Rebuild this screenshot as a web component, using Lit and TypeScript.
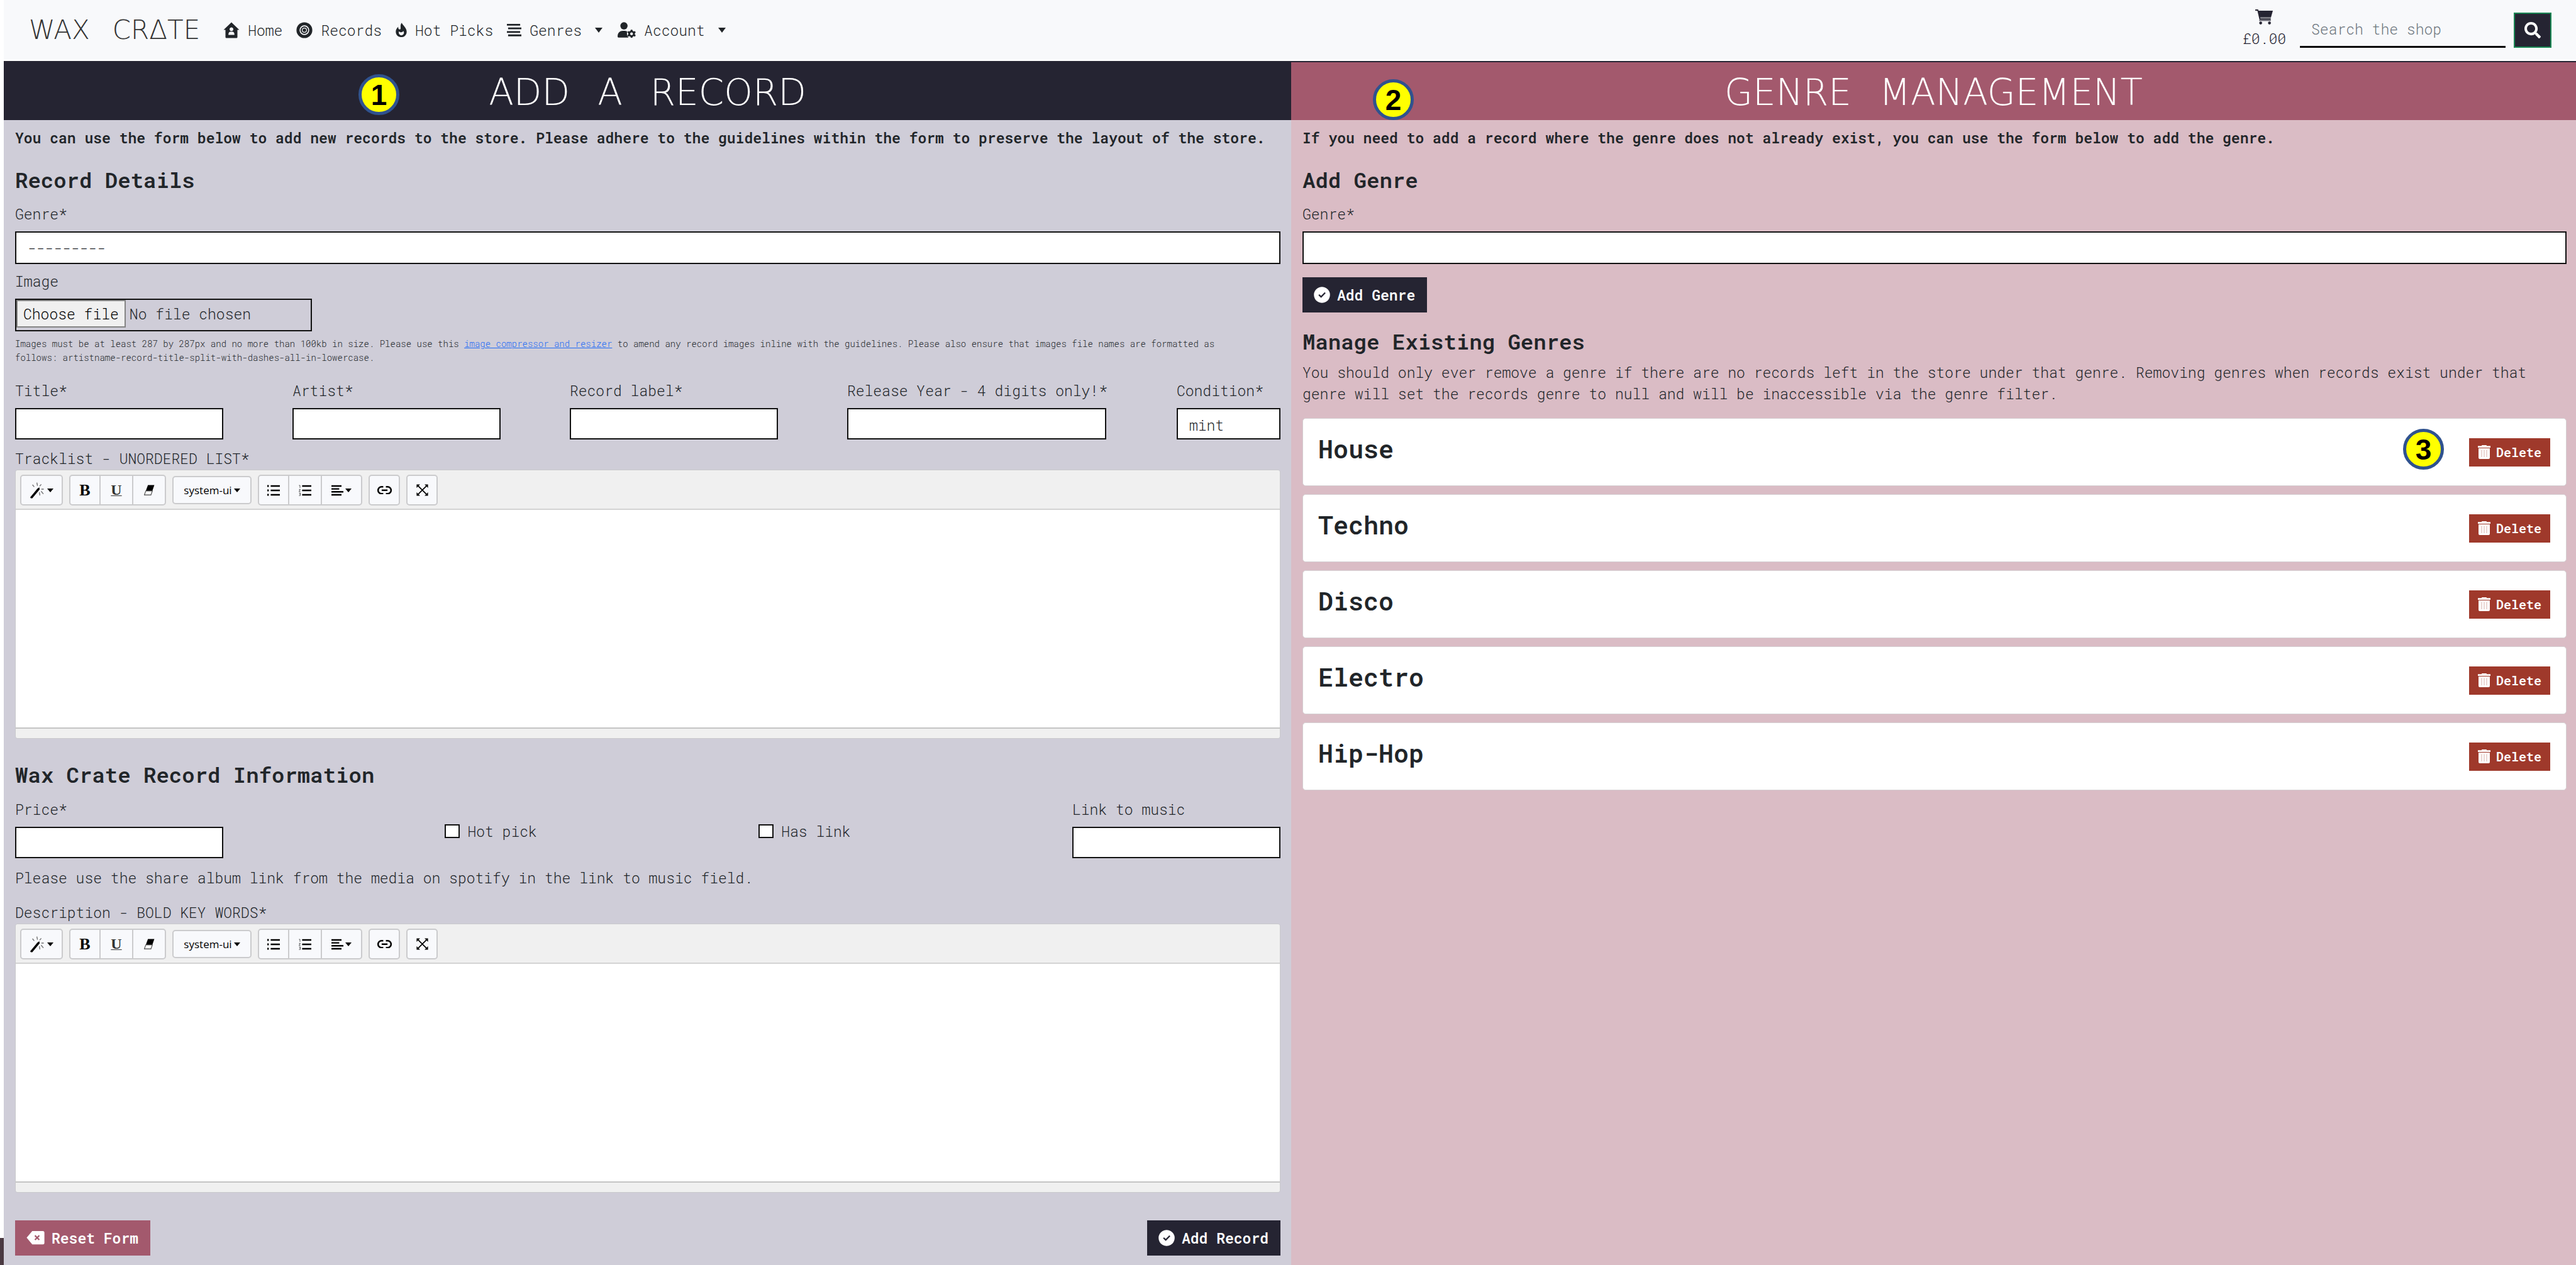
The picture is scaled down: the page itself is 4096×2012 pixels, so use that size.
import { LitElement, html, css, svg, nothing, type TemplateResult } from "lit";
import { customElement, property } from "lit/decorators.js";

const ICONS: Record<string, { box: string; body: TemplateResult }> = {
  home: {
    box: "0 0 26 26",
    body: svg`<path fill-rule="evenodd" d="M13 0.5 L25.5 12.5 H22.5 V24 Q22.5 25.5 21 25.5 H5 Q3.5 25.5 3.5 24 V12.5 H0.5 Z M13 8.6 a3 3 0 1 0 0.01 0 Z M8.2 20.6 H17.8 Q17.8 15.6 14.6 15.6 H11.4 Q8.2 15.6 8.2 20.6 Z"/>`,
  },
  vinyl: {
    box: "0 0 26 26",
    body: svg`<circle cx="13" cy="13" r="12.6"/><circle cx="13" cy="13" r="6.9" fill="none" stroke="#f8f9fb" stroke-width="1.6"/><circle cx="13" cy="13" r="3.4" fill="none" stroke="#f8f9fb" stroke-width="1.2"/>`,
  },
  fire: {
    box: "0 0 20 26",
    body: svg`<path fill-rule="evenodd" d="M11 0.3 C12 4.5 19.6 8.6 19.6 16 C19.6 21.8 15.3 25.7 10 25.7 C4.6 25.7 0.4 21.8 0.4 16.2 C0.4 11.6 3 9.3 4.6 7.2 C4.6 10.5 5.4 12 7 12 C11.4 12 6.2 5.2 11 0.3 Z M5.6 17.6 C5.6 20.4 7.5 22.4 10.2 22.4 C13 22.4 14.8 20.4 14.8 17.9 C14.8 16.6 14.2 15.4 13.4 14.6 C12.6 16.4 11 17.2 9 17 C7.4 16.8 6.6 16 6.2 15.2 C5.8 15.9 5.6 16.7 5.6 17.6 Z"/>`,
  },
  list: {
    box: "0 0 24 22",
    body: svg`<path d="M0 1 H22 V4 H0 Z M2 7 H24 V10 H2 Z M0 13 H22 V16 H0 Z M2 18.6 H24 V21.6 H2 Z"/>`,
  },
  user: {
    box: "0 0 30 26",
    body: svg`<circle cx="10.5" cy="6.3" r="6"/><path d="M1.5 25.5 Q0 25.5 0 24 C0 17.5 4 14.6 8.6 14.6 H12.4 L16 15.6 C14.6 19 15.5 23 18 25.5 Z"/><path fill-rule="evenodd" d="M21.7 12.6 H24.3 L24.8 14.6 L26.6 15.6 L28.6 15 L29.8 17.2 L28.4 18.6 V20.4 L29.8 21.8 L28.6 24 L26.6 23.4 L24.8 24.4 L24.3 26 H21.7 L21.2 24.4 L19.4 23.4 L17.4 24 L16.2 21.8 L17.6 20.4 V18.6 L16.2 17.2 L17.4 15 L19.4 15.6 L21.2 14.6 Z M23 17.2 a2.3 2.3 0 1 0 0.01 0 Z"/>`,
  },
  cart: {
    box: "0 0 28 24",
    body: svg`<path d="M0 0 H4.6 L5.2 2 H28 L25 12.6 H7.9 L8.4 14.8 H24.6 V16.6 H6.8 L3.4 1.9 H0 Z"/><path opacity="0.55" d="M8 12.4 H25 L24.4 15.2 H8.5 Z"/><path d="M6.2 16.6 H24.8 V18.4 H6.2 Z" opacity="0.7"/><circle cx="8.6" cy="21.6" r="2.3"/><circle cx="22.6" cy="21.6" r="2.3"/>`,
  },
  search: {
    box: "0 0 512 512",
    body: svg`<path d="M505 442.7L405.3 343c-4.5-4.5-10.6-7-17-7H372c27.6-35.3 44-79.7 44-128C416 93.1 322.9 0 208 0S0 93.1 0 208s93.1 208 208 208c48.3 0 92.7-16.4 128-44v16.3c0 6.4 2.5 12.5 7 17l99.7 99.7c9.4 9.4 24.6 9.4 33.9 0l28.3-28.3c9.4-9.4 9.4-24.6.1-34zM208 336c-70.7 0-128-57.2-128-128 0-70.7 57.2-128 128-128 70.7 0 128 57.2 128 128 0 70.7-57.2 128-128 128z"/>`,
  },
  check: {
    box: "0 0 26 26",
    body: svg`<path fill-rule="evenodd" d="M13 0.2 a12.8 12.8 0 1 0 0.01 0 Z M18.9 10.3 L12.2 17.2 Q11.6 17.8 11 17.2 L7.3 13.5 L8.9 11.9 L11.6 14.5 L17.3 8.7 Z"/>`,
  },
  erase: {
    box: "0 0 30 24",
    body: svg`<path fill-rule="evenodd" d="M9.6 1 H27 Q29.6 1 29.6 3.6 V20.4 Q29.6 23 27 23 H9.6 L0.4 12 Z M13.2 9.2 L16 12 L13.2 14.8 L14.8 16.4 L17.6 13.6 L20.4 16.4 L22 14.8 L19.2 12 L22 9.2 L20.4 7.6 L17.6 10.4 L14.8 7.6 Z"/>`,
  },
  trash: {
    box: "0 0 20 22",
    body: svg`<path d="M6.5 0 H13.5 L14.3 1.2 H20 V4 H0 V1.2 H5.7 Z M1 5 H19 V20 Q19 22 17 22 H3 Q1 22 1 20 Z"/><path d="M6 7.5 V19 M10 7.5 V19 M14 7.5 V19" stroke="#9f392b" stroke-opacity="0.35" stroke-width="1.2"/>`,
  },
  wand: {
    box: "0 0 24 26",
    body: svg`<path d="M1 25.4 L0 24 L11.4 10.2 L14.6 8 L15 11.6 L3.4 25.4 Z"/><path d="M10.6 0.6 L11.6 5.6 M3.6 4 L6.4 7.4 M17.6 3.4 L15 6.4 M17.8 11 H21.6 M17.4 14.2 L21 18.6 M14.6 16 L15.4 21" stroke="currentColor" stroke-width="1.4" stroke-opacity="0.55"/>`,
  },
  eraser: {
    box: "0 0 18 18",
    body: svg`<path d="M6.6 0.6 H17.4 L14 10.4 H3 Z"/><path d="M3 10.4 H14 L11.6 17.2 H0.6 Z" fill="#fff" stroke="currentColor" stroke-opacity="0.6" stroke-width="1.4"/>`,
  },
  ul: {
    box: "0 0 20 18",
    body: svg`<path d="M0 0.6 H2.4 V3.4 H0 Z M0 7.6 H2.4 V10.4 H0 Z M0 14.6 H2.4 V17.4 H0 Z M5.4 0.8 H20 V3.2 H5.4 Z M5.4 7.8 H20 V10.2 H5.4 Z M5.4 14.8 H20 V17.2 H5.4 Z"/>`,
  },
  ol: {
    box: "0 0 20 18",
    body: svg`<path d="M5.4 0.8 H20 V3.2 H5.4 Z M5.4 7.8 H20 V10.2 H5.4 Z M5.4 14.8 H20 V17.2 H5.4 Z"/><path d="M0.4 1 H2 V5 M0.4 7.4 H2.6 L0.4 10.6 H2.8 M0.4 13 H2.6 V17.2 H0.4 M1 15 H2.4" fill="none" stroke="currentColor" stroke-width="0.9" stroke-opacity="0.7"/>`,
  },
  align: {
    box: "0 0 19 18",
    body: svg`<path d="M0 0.8 H16 V3.2 H0 Z M0 5.4 H12.4 V7.8 H0 Z M0 10 H19 V12.4 H0 Z M0 14.8 H16 V17.2 H0 Z"/>`,
  },
  link: {
    box: "0 0 22 13",
    body: svg`<path d="M9 1.2 H6.4 A5.2 5.2 0 0 0 6.4 11.8 H9 M13 1.2 H15.6 A5.2 5.2 0 0 1 15.6 11.8 H13 M6.6 6.5 H15.4" fill="none" stroke="currentColor" stroke-width="2.4"/>`,
  },
  full: {
    box: "0 0 18 18",
    body: svg`<path d="M0.4 0.4 H5.6 L0.4 5.6 Z M17.6 0.4 V5.6 L12.4 0.4 Z M0.4 17.6 V12.4 L5.6 17.6 Z M17.6 17.6 H12.4 L17.6 12.4 Z"/><path d="M2 2 L16 16 M16 2 L2 16" stroke="currentColor" stroke-width="1.6"/>`,
  },
};

const icon = (name: string) =>
  html`<svg class="icon ${name}" viewBox=${ICONS[name].box} aria-hidden="true">${ICONS[name].body}</svg>`;

const shared = css`
  :host,
  * {
    box-sizing: border-box;
  }
  .icon {
    display: block;
    flex: none;
    fill: currentColor;
  }
  .caret {
    flex: none;
    width: 0;
    border: 6px solid transparent;
    border-top: 8px solid currentColor;
    border-bottom: 0;
  }
  button,
  input,
  select,
  textarea {
    margin: 0;
    border-radius: 0;
    font: inherit;
    color: inherit;
  }
`;

@customElement("rich-editor")
export class RichEditor extends LitElement {
  @property() label = "";

  static styles = [
    shared,
    css`
      :host {
        display: block;
        border: 1px solid #c9c9cc;
        border-radius: 4px;
        overflow: hidden;
        color: #000;
      }
      .toolbar {
        display: flex;
        align-items: center;
        gap: 10px;
        height: 63px;
        padding: 2px 7px 0;
        background: #f0f0f0;
        border-bottom: 2px solid #d3d3d3;
      }
      .group {
        display: flex;
        border: 2px solid #cbcbcd;
        border-radius: 5px;
        background: #f8f9fc;
      }
      .tool {
        display: flex;
        align-items: center;
        justify-content: center;
        gap: 3px;
        width: 46px;
        height: 45px;
        padding: 0;
        border: 0;
        background: none;
      }
      .tool + .tool {
        border-left: 2px solid #cbcbcd;
        width: 52px;
      }
      .tool.menu {
        width: 64px;
      }
      .tool.font {
        width: 122px;
        height: 41px;
        font: 17px "Open Sans", "Noto Sans", sans-serif;
      }
      .bold {
        font: bold 26px "Liberation Serif", serif;
      }
      .under {
        font: bold 24px "Liberation Serif", serif;
        text-decoration: underline;
        text-decoration-thickness: 1px;
        color: #333;
      }
      .caret {
        border-width: 5px;
        border-top-width: 6px;
        border-bottom: 0;
      }
      .wand { width: 24px; }
      .eraser { width: 17px; }
      .ul, .ol { width: 20px; }
      .align { width: 19px; }
      .link { width: 23px; }
      .full { width: 19px; }
      .area {
        display: block;
        width: 100%;
        height: 346px;
        padding: 12px;
        border: 0;
        resize: none;
        outline: 0;
        background: #fff;
      }
      .status {
        height: 17px;
        background: #f0f0f0;
        border-top: 2px solid #c4c4c4;
      }
    `,
  ];

  render() {
    const caret = html`<span class="caret"></span>`;
    return html`
      <div class="toolbar" role="toolbar" aria-label=${this.label}>
        <div class="group">
          <button type="button" class="tool menu" aria-label="Style">${icon("wand")}${caret}</button>
        </div>
        <div class="group">
          <button type="button" class="tool bold">B</button>
          <button type="button" class="tool under">U</button>
          <button type="button" class="tool" aria-label="Remove font style">${icon("eraser")}</button>
        </div>
        <div class="group">
          <button type="button" class="tool font">system-ui${caret}</button>
        </div>
        <div class="group">
          <button type="button" class="tool" aria-label="Unordered list">${icon("ul")}</button>
          <button type="button" class="tool" aria-label="Ordered list">${icon("ol")}</button>
          <button type="button" class="tool menu" aria-label="Paragraph">${icon("align")}${caret}</button>
        </div>
        <div class="group">
          <button type="button" class="tool" aria-label="Link">${icon("link")}</button>
        </div>
        <div class="group">
          <button type="button" class="tool" aria-label="Full screen">${icon("full")}</button>
        </div>
      </div>
      <textarea class="area" aria-label=${this.label}></textarea>
      <div class="status"></div>
    `;
  }
}

const NAV = [
  { icon: "home", text: "Home", menu: false },
  { icon: "vinyl", text: "Records", menu: false },
  { icon: "fire", text: "Hot Picks", menu: false },
  { icon: "list", text: "Genres", menu: true },
  { icon: "user", text: "Account", menu: true },
];

const GENRES = ["House", "Techno", "Disco", "Electro", "Hip-Hop"];

const words = (text: string) => text.split(" ").map((w) => html`<span>${w}</span> `);

@customElement("app-root")
export class AppRoot extends LitElement {
  static styles = [
    shared,
    css`
      :host {
        display: flex;
        flex-direction: column;
        min-height: 100vh;
        background: #fff;
        color: #212529;
        font: 350 23px/34px "Roboto Mono", "Liberation Mono", monospace;
      }
      h1,
      h2,
      h3,
      p {
        margin: 0;
      }
      .nav {
        display: flex;
        align-items: center;
        height: 95px;
        margin-left: 6px;
        padding: 0 39px 0 40px;
        background: #f8f9fb;
      }
      .brand,
      .title {
        display: flex;
        font-family: "DejaVu Sans Light", "DejaVu Sans", sans-serif;
        font-weight: 200;
        text-decoration: none;
      }
      .brand {
        gap: 36px;
        margin-right: 37px;
        font-size: 42px;
        line-height: 50px;
        color: #333;
      }
      .nav-link {
        display: flex;
        align-items: center;
        gap: 13px;
        margin-right: 22px;
        color: #212529;
        text-decoration: none;
      }
      .nav-link .caret {
        margin: 0 2px 0 8px;
      }
      .home, .vinyl { width: 26px; }
      .fire { width: 18px; }
      .list { width: 23px; }
      .user { width: 29px; }
      .cart-link {
        display: flex;
        flex-direction: column;
        align-items: center;
        margin: 0 22px 0 auto;
        padding-top: 3px;
        color: #252432;
        text-decoration: none;
      }
      .cart { width: 28px; }
      .cart-link .sum { line-height: 44px; }
      .search-form {
        display: flex;
        align-items: center;
        gap: 13px;
      }
      .search-box {
        width: 327px;
        height: 56px;
        padding: 0 18px;
        border: 0;
        border-bottom: 3px solid #000;
        background: none;
        outline: 0;
      }
      .search-box::placeholder {
        color: #6c757d;
        opacity: 1;
      }
      .search-btn {
        display: flex;
        align-items: center;
        justify-content: center;
        width: 60px;
        height: 56px;
        padding: 0;
        border: 2px solid #198754;
        background: #252432;
        color: #fff;
      }
      .search { width: 26px; }
      .columns {
        display: grid;
        grid-template-columns: calc(50% + 2px) 1fr;
        flex: 1;
        margin-top: 2px;
        background: linear-gradient(#fff 1872px, #4b3a42 1872px);
        padding-left: 6px;
      }
      .panel {
        min-width: 0;
        background: #cfcdd8;
      }
      .panel.rose {
        background: #dabcc5;
      }
      .banner {
        position: relative;
        display: flex;
        align-items: center;
        justify-content: center;
        height: 94px;
        padding-top: 3px;
        border-top: 2px solid #252432;
        background: #252432;
        color: #fff;
      }
      .rose .banner {
        background: #a3596d;
      }
      .title {
        gap: 44px;
        font-size: 58px;
        line-height: 70px;
      }
      .badge {
        position: absolute;
        display: flex;
        align-items: center;
        justify-content: center;
        width: 65px;
        height: 65px;
        border: 5px solid #2f528f;
        border-radius: 50%;
        background: #ff0;
        color: #000;
        font: bold 46px "Liberation Sans", sans-serif;
      }
      .one { left: 564px; top: 19px; }
      .two { left: 130px; top: 27px; }
      .three { right: 194px; top: 16px; }
      .content {
        display: flex;
        flex-direction: column;
        align-items: stretch;
        padding: 11px 17px 13px 18px;
      }
      .rose .content {
        padding: 11px 15px 13px 18px;
      }
      .lead {
        font-weight: 600;
      }
      .heading {
        margin-top: 30px;
        font-size: 34px;
        line-height: 40px;
        font-weight: 600;
      }
      .field {
        display: flex;
        flex-direction: column;
        gap: 12px;
      }
      .field label,
      .caption {
        line-height: 32px;
      }
      .box {
        height: 52px;
        width: 100%;
        padding: 0 18px;
        border: 2px solid #111;
        background: #fff;
        appearance: none;
        outline: 0;
      }
      .row {
        display: flex;
        justify-content: space-between;
      }
      .row .box {
        width: 331px;
        height: 50px;
      }
      .row .year { width: 412px; }
      .row .condition { width: 165px; padding-top: 4px; }
      .first { margin-top: 18px; }
      .next { margin-top: 11px; }
      .file {
        position: relative;
        display: flex;
        align-items: center;
        gap: 6px;
        width: 472px;
        height: 52px;
        border: 2px solid #111;
      }
      .file-btn {
        height: 44px;
        padding: 3px 9px 0;
        border: 2px solid #858585;
        background: #f0f0f0;
        color: #000;
      }
      .file-text {
        height: 42px;
        padding-top: 4px;
      }
      .file-btn,
      .file-text {
        margin-bottom: 4px;
      }
      .file-input {
        position: absolute;
        inset: 0;
        opacity: 0;
        width: 100%;
        height: 100%;
      }
      .help {
        margin: 9px 0 25px;
        font-size: 14px;
        line-height: 22px;
      }
      .help a {
        color: #1f6bf5;
      }
      .tracks { margin: 14px 0 2px; }
      .info { margin: 37px 0 19px; }
      .choice {
        display: flex;
        align-items: center;
        gap: 12px;
        height: 34px;
        margin-top: 34px;
      }
      .tick {
        appearance: none;
        width: 24px;
        height: 22px;
        border: 2px solid #111;
        background: #fff;
      }
      .note { margin: 14px 0 22px; }
      .desc { margin-bottom: 2px; }
      .actions {
        display: flex;
        justify-content: space-between;
        margin-top: 44px;
      }
      .btn {
        display: flex;
        align-items: center;
        gap: 11px;
        height: 56px;
        padding: 0 19px 0 18px;
        border: 0;
        background: #252432;
        color: #fff;
        font-weight: 600;
      }
      .btn.reset { background: #a3596d; }
      .check { width: 26px; }
      .erase { width: 29px; }
      .add { margin-top: 21px; align-self: flex-start; }
      .manage { margin-top: 26px; }
      .warn { margin-top: 12px; }
      .cards {
        display: flex;
        flex-direction: column;
        gap: 13px;
        margin: 22px 0 0;
        padding: 0;
        list-style: none;
      }
      .card {
        position: relative;
        display: flex;
        align-items: center;
        justify-content: space-between;
        height: 108px;
        padding: 0 25px 0 24px;
        border: 1px solid #d5d0d3;
        border-radius: 5px;
        background: #fff;
      }
      .card h3 {
        padding-bottom: 10px;
        font-size: 40px;
        line-height: 48px;
        font-weight: 600;
      }
      .btn.delete {
        height: 45px;
        padding: 0 14px;
        gap: 9px;
        background: #9f392b;
        font-size: 20px;
      }
      .trash { width: 20px; }
    `,
  ];

  private text(id: string, label: string, cls = "") {
    return html`<div class="field">
      <label for=${id}>${label}</label>
      <input id=${id} type="text" class="box ${cls}" />
    </div>`;
  }

  render() {
    return html`
      <nav class="nav">
        <a class="brand" href="#">${words("WAX CRΔTE")}</a>
        ${NAV.map(
          (n) => html`<a class="nav-link" href="#"
            >${icon(n.icon)}<span>${n.text}</span>${n.menu ? html`<span class="caret"></span>` : nothing}</a
          >`,
        )}
        <a class="cart-link" href="#">${icon("cart")}<span class="sum">£0.00</span></a>
        <form class="search-form">
          <input class="search-box" type="search" placeholder="Search the shop" aria-label="Search the shop" />
          <button class="search-btn" type="button" aria-label="Search">${icon("search")}</button>
        </form>
      </nav>

      <main class="columns">
        <section class="panel">
          <header class="banner">
            <h1 class="title">${words("ADD A RECORD")}</h1>
            <span class="badge one">1</span>
          </header>
          <form class="content">
            <p class="lead">
              You can use the form below to add new records to the store. Please adhere to the guidelines within the
              form to preserve the layout of the store.
            </p>
            <h2 class="heading">Record Details</h2>
            <div class="field first">
              <label for="genre">Genre*</label>
              <select id="genre" class="box"><option>---------</option></select>
            </div>
            <div class="field next">
              <label for="image">Image</label>
              <div class="file">
                <span class="file-btn">Choose file</span><span class="file-text">No file chosen</span>
                <input id="image" class="file-input" type="file" />
              </div>
            </div>
            <p class="help">
              Images must be at least 287 by 287px and no more than 100kb in size. Please use this
              <a href="#">image compressor and resizer</a> to amend any record images inline with the guidelines. Please
              also ensure that images file names are formatted as<br />follows:
              artistname-record-title-split-with-dashes-all-in-lowercase.
            </p>
            <div class="row">
              ${this.text("title", "Title*")} ${this.text("artist", "Artist*")}
              ${this.text("label", "Record label*")}
              ${this.text("year", "Release Year - 4 digits only!*", "year")}
              <div class="field">
                <label for="condition">Condition*</label>
                <select id="condition" class="box condition"><option>mint</option></select>
              </div>
            </div>
            <div class="caption tracks">Tracklist - UNORDERED LIST*</div>
            <rich-editor label="Tracklist"></rich-editor>
            <h2 class="heading info">Wax Crate Record Information</h2>
            <div class="row">
              ${this.text("price", "Price*")}
              <label class="choice"><input type="checkbox" class="tick" />Hot pick</label>
              <label class="choice"><input type="checkbox" class="tick" />Has link</label>
              ${this.text("music", "Link to music")}
            </div>
            <p class="note">Please use the share album link from the media on spotify in the link to music field.</p>
            <div class="caption desc">Description - BOLD KEY WORDS*</div>
            <rich-editor label="Description"></rich-editor>
            <div class="actions">
              <button type="reset" class="btn reset">${icon("erase")}Reset Form</button>
              <button type="button" class="btn">${icon("check")}Add Record</button>
            </div>
          </form>
        </section>

        <section class="panel rose">
          <header class="banner">
            <h1 class="title">${words("GENRE MANAGEMENT")}</h1>
            <span class="badge two">2</span>
          </header>
          <div class="content">
            <p class="lead">
              If you need to add a record where the genre does not already exist, you can use the form below to add the
              genre.
            </p>
            <h2 class="heading">Add Genre</h2>
            <div class="field first">
              <label for="new-genre">Genre*</label>
              <input id="new-genre" type="text" class="box" />
            </div>
            <button type="button" class="btn add">${icon("check")}Add Genre</button>
            <h2 class="heading manage">Manage Existing Genres</h2>
            <p class="warn">
              You should only ever remove a genre if there are no records left in the store under that genre. Removing
              genres when records exist under that genre will set the records genre to null and will be inaccessible via
              the genre filter.
            </p>
            <ul class="cards">
              ${GENRES.map(
                (g, i) => html`<li class="card">
                  <h3>${g}</h3>
                  ${i === 0 ? html`<span class="badge three">3</span>` : nothing}
                  <button type="button" class="btn delete">${icon("trash")}Delete</button>
                </li>`,
              )}
            </ul>
          </div>
        </section>
      </main>
    `;
  }
}
